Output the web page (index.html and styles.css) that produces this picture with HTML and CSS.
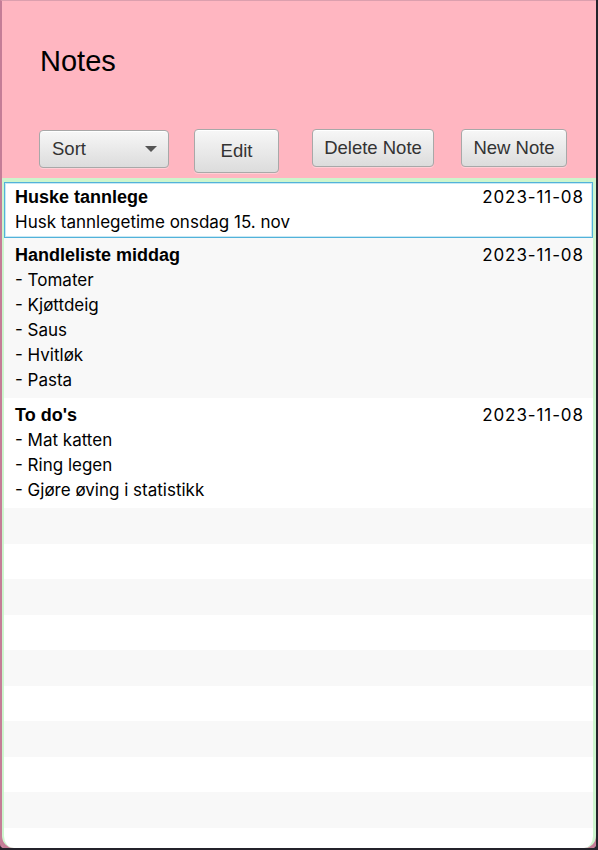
FILE: index.html
```html
<!DOCTYPE html>
<html lang="no">
<head>
<meta charset="utf-8">
<title>Notes</title>
<link rel="stylesheet" href="styles.css">
</head>
<body>
<div class="window">
  <header class="header">
    <h1 class="title">Notes</h1>
    <div class="toolbar">
      <div class="combo"><span class="combo-label">Sort</span><span class="arrow"></span></div>
      <button class="btn btn-edit">Edit</button>
      <button class="btn btn-delete">Delete Note</button>
      <button class="btn btn-new">New Note</button>
    </div>
  </header>
  <div class="list-frame">
    <ul class="list">
      <li class="item selected">
        <div class="item-head"><span class="item-title">Huske tannlege</span><span class="item-date">2023-11-08</span></div>
        <div class="line">Husk tannlegetime onsdag 15. nov</div>
      </li>
      <li class="item">
        <div class="item-head"><span class="item-title">Handleliste middag</span><span class="item-date">2023-11-08</span></div>
        <div class="line">- Tomater</div>
        <div class="line">- Kjøttdeig</div>
        <div class="line">- Saus</div>
        <div class="line">- Hvitløk</div>
        <div class="line">- Pasta</div>
      </li>
      <li class="item">
        <div class="item-head"><span class="item-title">To do's</span><span class="item-date">2023-11-08</span></div>
        <div class="line">- Mat katten</div>
        <div class="line">- Ring legen</div>
        <div class="line">- Gjøre øving i statistikk</div>
      </li>
      <li class="empty"></li>
      <li class="empty"></li>
      <li class="empty"></li>
      <li class="empty"></li>
      <li class="empty"></li>
      <li class="empty"></li>
      <li class="empty"></li>
      <li class="empty"></li>
      <li class="empty"></li>
      <li class="empty"></li>
    </ul>
  </div>
</div>
</body>
</html>
```
FILE: styles.css
```css
html, body {
  margin: 0;
  padding: 0;
  background: #24232b;
  height: 850px;
  overflow: hidden;
}

.window {
  width: 594px;
  height: 847px;
  border-top: 1px solid #dc9fae;
  border-left: 2px solid #c47d97;
  background: #ffb6c1;
  display: flex;
  flex-direction: column;
  border-bottom-left-radius: 4px;
  border-bottom-right-radius: 4px;
  overflow: hidden;
}

.header {
  height: 177px;
  box-sizing: border-box;
  padding: 43px 0 0 37px;
  font-family: "Liberation Sans", Arial, sans-serif;
}

.title {
  margin: 0 0 0 1px;
  font-size: 29px;
  line-height: 34px;
  font-weight: normal;
  color: #000;
}

.toolbar {
  display: flex;
  align-items: flex-start;
  margin-top: 51px;
}

.combo,
.btn {
  box-sizing: border-box;
  border: 1px solid #a8a8a8;
  border-radius: 4px;
  background: linear-gradient(#f7f7f7, #dcdcdc);
  box-shadow: inset 0 1px 0 #ffffff, 0 1px 0 rgba(255, 255, 255, 0.35);
  color: #333;
  font-family: "Liberation Sans", Arial, sans-serif;
  font-size: 18.5px;
  padding: 0;
}

.combo {
  width: 130px;
  height: 38px;
  margin-top: 1px;
  display: flex;
  align-items: center;
  justify-content: space-between;
  padding: 0 11px 0 12px;
}

.arrow {
  width: 0;
  height: 0;
  border-left: 6px solid transparent;
  border-right: 6px solid transparent;
  border-top: 6px solid #555;
}

.btn-edit {
  width: 85px;
  height: 44px;
  margin-left: 25px;
}

.btn-delete {
  width: 122px;
  height: 38px;
  margin-left: 33px;
}

.btn-new {
  width: 106px;
  height: 38px;
  margin-left: 27px;
}

.list-frame {
  flex: 1;
  background: #c47d97;
  min-height: 0;
}

.list {
  list-style: none;
  margin: 0;
  padding: 0;
  box-sizing: border-box;
  height: 100%;
  background: #fff;
  border-style: solid;
  border-color: #cdf5cd;
  border-width: 4px 3px 0 2px;
  border-radius: 0 0 12px 12px;
  overflow: hidden;
  font-family: Inter, "Noto Sans", sans-serif;
  font-size: 17px;
  color: #000;
}

.item {
  border: 1px solid transparent;
  padding: 4px 9px 4px 10px;
  line-height: 25px;
}

.item:nth-child(even),
.empty:nth-child(even) {
  background: #f8f8f8;
}

.item.selected {
  border-color: #52b2da;
  box-shadow: inset 0 0 0 1px #c8e8f4;
  padding-top: 2px;
  padding-bottom: 2px;
}

.item-head {
  display: flex;
  justify-content: space-between;
  align-items: flex-start;
  height: 25px;
}

.item-title {
  font-family: "Liberation Sans", Arial, sans-serif;
  font-size: 18px;
  font-weight: bold;
  line-height: 25px;
}

.item-date {
  font-size: 17px;
  letter-spacing: 0.9px;
  margin-right: -0.9px;
  line-height: 25px;
}

.empty {
  height: 35.5px;
}
```
